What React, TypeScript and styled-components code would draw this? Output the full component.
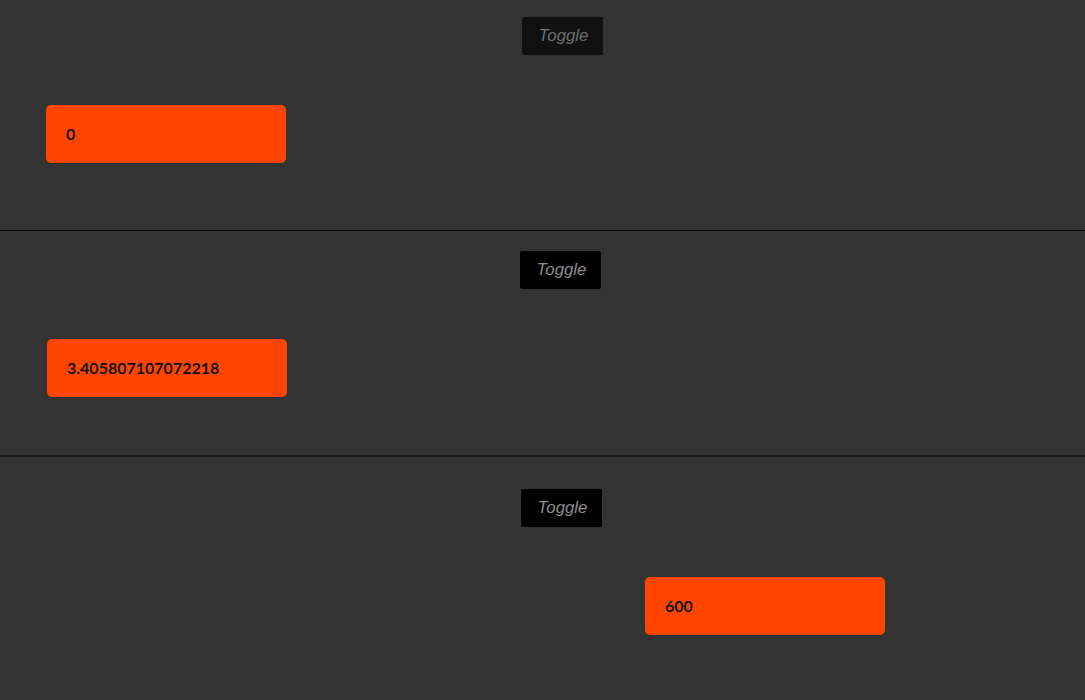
import React from "react";
import styled, { createGlobalStyle } from "styled-components";

const GlobalStyle = createGlobalStyle`
  html, body {
    margin: 0;
    padding: 0;
    background: #333333;
    overflow: hidden;
  }
  body {
    font-family: "Liberation Sans", Arial, sans-serif;
  }
`;

const Page = styled.div`
  display: flex;
  flex-direction: column;
  width: 100%;
  height: 700px;
  background: #333333;
`;

const Section = styled.section<{ $top: number; $height: number; $border: string; $borderWidth: number }>`
  display: flex;
  flex-direction: column;
  align-items: flex-start;
  gap: 50px;
  box-sizing: border-box;
  flex: 0 0 auto;
  height: ${(p) => p.$height}px;
  padding-top: ${(p) => p.$top}px;
  border-bottom: ${(p) => p.$borderWidth}px solid ${(p) => p.$border};
`;

const ButtonRow = styled.div<{ $shift: number }>`
  display: flex;
  justify-content: center;
  width: 100%;
  padding-left: ${(p) => p.$shift}px;
  box-sizing: border-box;
`;

const ToggleButton = styled.button<{ $dim?: boolean }>`
  width: 81px;
  height: 38px;
  border: none;
  border-radius: 2px;
  background: #000000;
  color: #8e8e8e;
  font-family: "Liberation Sans", Arial, sans-serif;
  font-style: italic;
  font-size: 16.8px;
  padding: 0 0 0 3px;
  cursor: pointer;
  opacity: ${(p) => (p.$dim ? 0.66 : 1)};
`;

const ValueBox = styled.div<{ $x: number }>`
  display: flex;
  align-items: center;
  width: 240px;
  height: 58px;
  box-sizing: border-box;
  padding: 0 0 2px 20px;
  margin-left: ${(p) => p.$x}px;
  border-radius: 5px;
  background: #ff4500;
  color: #111111;
  font-family: Lato, "Open Sans", sans-serif;
  font-weight: 700;
  font-size: 16px;
`;

const demos = [
  { value: "0", x: 46, top: 17, height: 231, border: "#0a0a0a", bw: 1, shift: 39, dim: true },
  { value: "3.405807107072218", x: 47, top: 20, height: 226, border: "#1a1a1a", bw: 2, shift: 35, dim: false },
  { value: "600", x: 645, top: 32, height: 243, border: "transparent", bw: 0, shift: 37, dim: false },
];

export default function App() {
  return (
    <>
      <GlobalStyle />
      <Page>
        {demos.map((d, i) => (
          <Section key={i} $top={d.top} $height={d.height} $border={d.border} $borderWidth={d.bw}>
            <ButtonRow $shift={d.shift}>
              <ToggleButton $dim={d.dim}>Toggle</ToggleButton>
            </ButtonRow>
            <ValueBox $x={d.x}>{d.value}</ValueBox>
          </Section>
        ))}
      </Page>
    </>
  );
}
